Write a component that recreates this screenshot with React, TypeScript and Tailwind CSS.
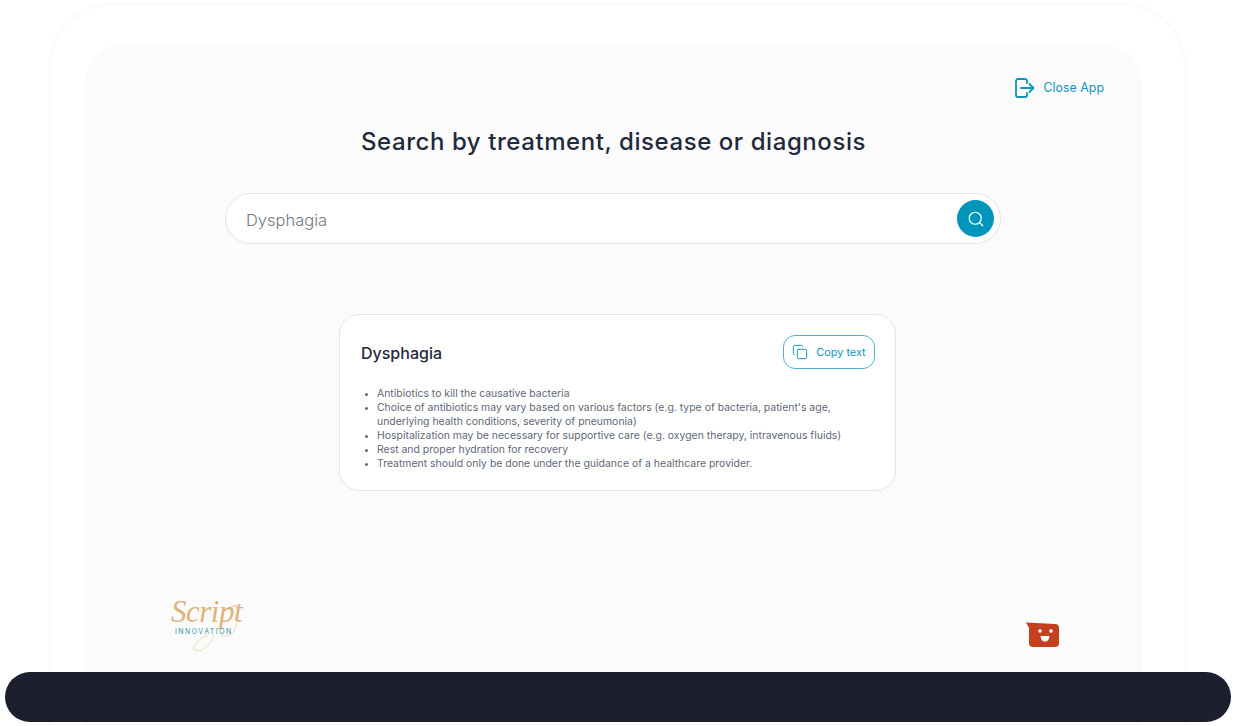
import { Copy, Search } from "lucide-react"

const bullets = [
  "Antibiotics to kill the causative bacteria",
  "Choice of antibiotics may vary based on various factors (e.g. type of bacteria, patient's age, underlying health conditions, severity of pneumonia)",
  "Hospitalization may be necessary for supportive care (e.g. oxygen therapy, intravenous fluids)",
  "Rest and proper hydration for recovery",
  "Treatment should only be done under the guidance of a healthcare provider.",
]

const ScriptLogo = () => {
  return (
    <div className="relative h-[56px] w-[72px]">
      <svg className="absolute inset-0" width="72" height="56" viewBox="0 0 72 56" fill="none">
        <path d="M44 38 C40 50 30 56 25 53 C20 49 30 42 38 38" stroke="#e8cf9a" strokeWidth="0.7" />
        <path d="M50 38 C58 41 68 35 66 26" stroke="#e8cf9a" strokeWidth="0.7" />
        <path d="M54 14 C60 10 66 8 70 8" stroke="#dca862" strokeWidth="0.8" />
      </svg>
      <span className="absolute left-[1px] top-0 font-['Liberation_Serif',serif] text-[31px] italic leading-[30px] tracking-[-0.5px] text-[#deb47a]">
        Script
      </span>
      <span className="absolute left-[5px] top-[30px] font-['Inter',sans-serif] text-[7px] leading-[9px] tracking-[1.45px] text-[#3a98a5]">
        INNOVATION
      </span>
    </div>
  )
}

const MascotIcon = () => {
  return (
    <svg width="34" height="26" viewBox="0 0 34 26" fill="none">
      <path d="M0 0.5 L29 2 Q33 2 33 6 V21 Q33 25 29 25 H7 Q3 25 3 21 V6 Z" fill="#c4401f" />
      <circle cx="14" cy="9" r="1.8" fill="#fff" />
      <circle cx="25" cy="9" r="1.8" fill="#fff" />
      <path d="M14.5 14 H23.5 Q23 19.5 19 19.5 Q15 19.5 14.5 14 Z" fill="#fff" />
    </svg>
  )
}

const CloseIcon = () => {
  return (
    <svg width="20" height="20" viewBox="0 0 20 20" fill="none" stroke="#0996bc" strokeWidth="1.8" strokeLinecap="round" strokeLinejoin="round">
      <path d="M12 5 V3 a2 2 0 0 0 -2 -2 H3 a2 2 0 0 0 -2 2 V17 a2 2 0 0 0 2 2 H10 a2 2 0 0 0 2 -2 V15" />
      <path d="M6 10 H18.5 M14.5 6 L18.5 10 L14.5 14" />
    </svg>
  )
}

export default function App() {
  return (
    <div className="relative h-[726px] w-full overflow-hidden bg-white font-['Inter',sans-serif]">
      {/* outer device frame */}
      <div className="ml-[48px] mt-[3px] h-[723px] w-[1139px] rounded-t-[64px] border-[3px] border-b-0 border-[#fbfbfb] pl-[34px] pt-[38px]">
        {/* main panel */}
        <div className="h-[685px] w-[1057px] rounded-t-[40px] bg-[#fbfbfb] px-[38px] pt-[32px]">
          <div className="flex justify-end">
            <button className="flex items-center gap-[9px] text-[#0b97bd]">
              <CloseIcon />
              <span className="text-[12.4px] leading-[24px]">Close App</span>
            </button>
          </div>

          <h1 className="mt-[26px] text-center text-[24px] font-medium leading-[32px] tracking-[0.57px] text-[#1f2a3c]">
            Search by treatment, disease or diagnosis
          </h1>

          {/* search box */}
          <div className="ml-[102px] mt-[35px] flex h-[51px] w-[776px] items-center justify-between rounded-full border border-[#e5e5e5] bg-white pl-[20px] pr-[6px]">
            <span className="pt-[4px] text-[16.5px] font-light text-[#737880]">Dysphagia</span>
            <div className="flex h-[37px] w-[37px] items-center justify-center rounded-full bg-[#0096bb]">
              <Search size={18} strokeWidth={1.6} className="text-white" />
            </div>
          </div>

          {/* result card */}
          <div className="ml-[216px] mt-[70px] h-[177px] w-[557px] rounded-[20px] border border-[#e5e5e5] bg-white pl-[21px] pr-[20px] pt-[19px]">
            <div className="flex items-center justify-between">
              <h2 className="pt-[2px] text-[16px] font-medium leading-[34px] text-[#1f2a3c]">Dysphagia</h2>
              <button className="flex h-[34px] w-[92px] items-center justify-center gap-[8px] rounded-[12px] border border-[#4fb2cd] text-[#0b97bd]">
                <Copy size={16} strokeWidth={1.5} />
                <span className="text-[10.9px]">Copy text</span>
              </button>
            </div>
            <ul className="mt-[17px] list-disc pl-[16px] text-[10.45px] leading-[14px] text-[#5f6878] marker:text-[8px]">
              {bullets.map((b) => (
                <li key={b}>{b}</li>
              ))}
            </ul>
          </div>

          {/* footer logos */}
          <div className="mt-[106px] flex items-start justify-between pl-[47px] pr-[44px]">
            <ScriptLogo />
            <div className="mt-[25px]">
              <MascotIcon />
            </div>
          </div>
        </div>
      </div>

      {/* dark bar overlaps the frame */}
      <div className="absolute bottom-[4px] left-[5px] h-[50px] w-[1226px] rounded-[25px] bg-[#1b1f2e]" />
    </div>
  )
}
